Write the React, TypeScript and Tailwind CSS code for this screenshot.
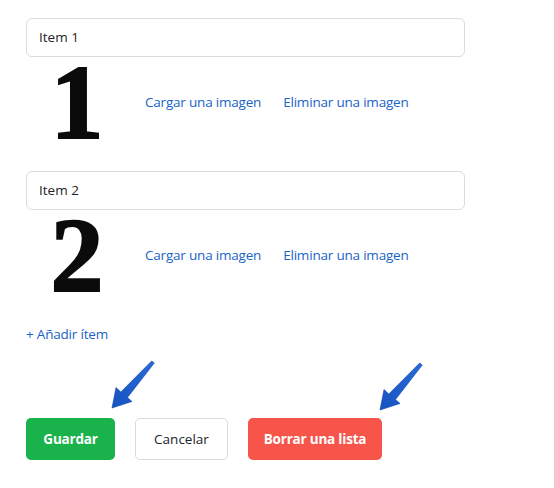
import React from 'react';

const font = { fontFamily: '"Open Sans", "Noto Sans", sans-serif' };

function Arrow({ className }: { className: string }) {
  return (
    <svg className={className} width="56" height="60" viewBox="0 0 56 60">
      <defs>
        <linearGradient id="arrowBlue" x1="0" y1="1" x2="1" y2="0">
          <stop offset="0" stopColor="#1553c2" />
          <stop offset="1" stopColor="#2a6ad6" />
        </linearGradient>
      </defs>
      <polygon
        points="7,53 27,46.5 22.5,42.5 49.3,8 46.7,6 15.8,37 11,32.5"
        fill="url(#arrowBlue)"
        stroke="#0e43a8"
        strokeWidth="0.6"
        strokeLinejoin="round"
      />
    </svg>
  );
}

function ItemRow({ label, digit }: { label: string; digit: string }) {
  return (
    <div className="flex flex-col">
      <div className="w-[439px] h-[39px] rounded-[6px] border border-[#dcdcdc] bg-white flex items-center px-[12px] text-[13.5px] text-[#212529]">
        {label}
      </div>
      <div className="flex items-center mt-[5px] h-[80px]">
        <div
          className="ml-[18px] w-[66px] h-[80px] flex items-center justify-center text-[106px] leading-none font-bold text-[#0b0b0b] [-webkit-text-stroke:2px_#0b0b0b]"
          style={{ fontFamily: '"Liberation Serif", "DejaVu Serif", serif' }}
        >
          <span className="mt-[2px]">{digit}</span>
        </div>
        <div className="ml-[35px] flex gap-[22px] text-[13.5px] tracking-[-0.2px] text-[#1a64c6]">
          <span>Cargar una imagen</span>
          <span>Eliminar una imagen</span>
        </div>
      </div>
    </div>
  );
}

export default function App() {
  return (
    <div className="relative w-[554px] h-[488px] bg-white" style={font}>
      <div className="flex flex-col pl-[26px] pt-[18px]">
        <ItemRow label="Item 1" digit="1" />
        <div className="mt-[29px]">
          <ItemRow label="Item 2" digit="2" />
        </div>
        <div className="mt-[29px] h-[20px] flex items-center text-[13.5px] tracking-[-0.2px] text-[#1a64c6]">
          + Añadir ítem
        </div>
        <div className="mt-[74px] flex items-center">
          <button className="w-[89px] h-[42px] rounded-[5px] bg-[#19b24b] text-white text-[13.5px] tracking-[-0.2px] font-bold">
            Guardar
          </button>
          <button className="ml-[20px] w-[93px] h-[42px] rounded-[5px] border border-[#dadada] bg-white text-[#212529] text-[13.5px]">
            Cancelar
          </button>
          <button className="ml-[20px] w-[134px] h-[42px] rounded-[5px] bg-[#f7554a] text-white text-[13.5px] tracking-[-0.2px] font-bold">
            Borrar una lista
          </button>
        </div>
      </div>
      <Arrow className="absolute left-[105px] top-[355px]" />
      <Arrow className="absolute left-[373px] top-[357px]" />
    </div>
  );
}
